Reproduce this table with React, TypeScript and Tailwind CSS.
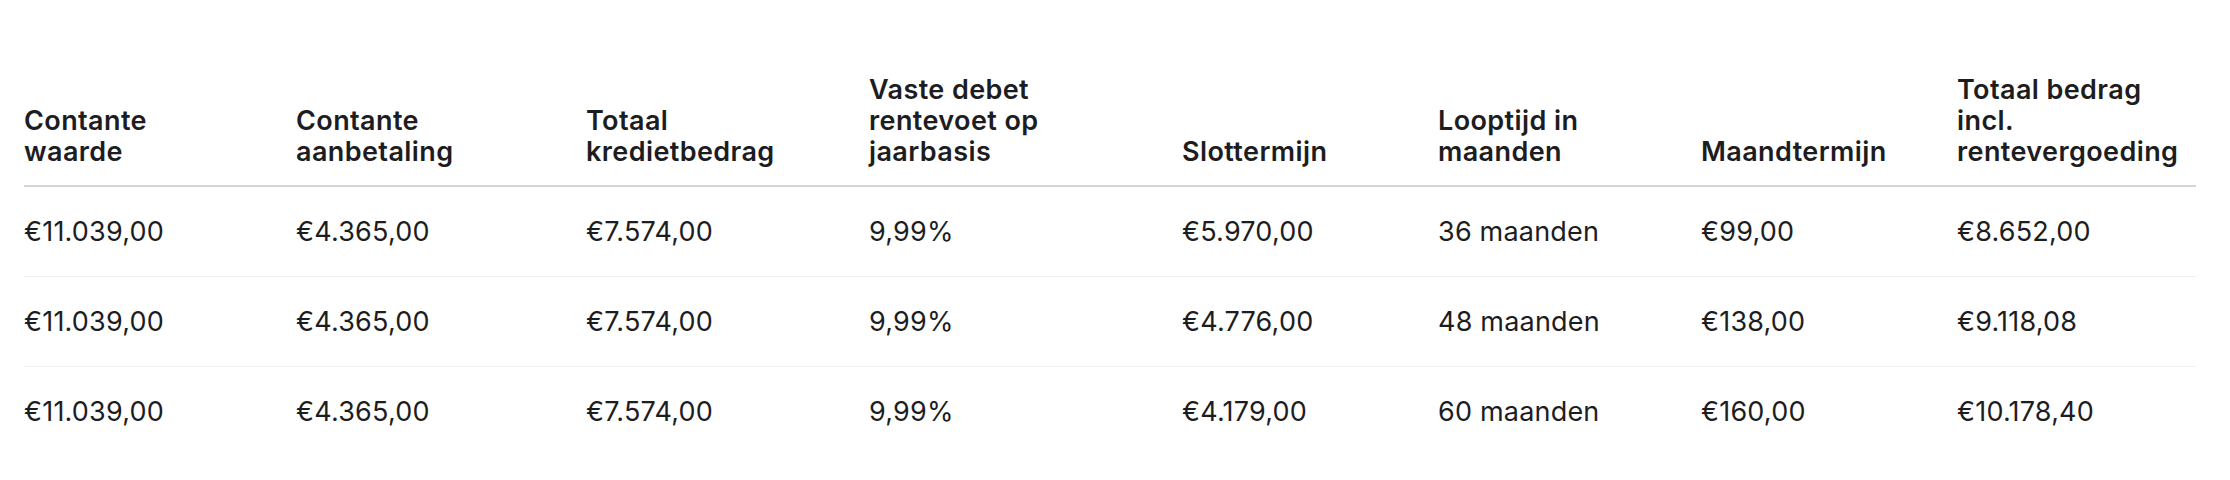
const headers: React.ReactNode[] = [
  <>Contante<br />waarde</>,
  <>Contante<br />aanbetaling</>,
  <>Totaal<br />kredietbedrag</>,
  <>Vaste debet<br />rentevoet op<br />jaarbasis</>,
  <>Slottermijn</>,
  <>Looptijd in<br />maanden</>,
  <>Maandtermijn</>,
  <>Totaal bedrag<br />incl.<br />rentevergoeding</>,
];

const rows = [
  ["€11.039,00", "€4.365,00", "€7.574,00", "9,99%", "€5.970,00", "36 maanden", "€99,00", "€8.652,00"],
  ["€11.039,00", "€4.365,00", "€7.574,00", "9,99%", "€4.776,00", "48 maanden", "€138,00", "€9.118,08"],
  ["€11.039,00", "€4.365,00", "€7.574,00", "9,99%", "€4.179,00", "60 maanden", "€160,00", "€10.178,40"],
];

function App() {
  return (
    <div className="min-h-[480px] bg-white px-6 pt-[56px] font-['Inter',sans-serif] text-[#1d1d1f]">
      <table className="w-[2172px] table-fixed border-collapse text-left">
        <colgroup>
          <col className="w-[272px]" />
          <col className="w-[290px]" />
          <col className="w-[283px]" />
          <col className="w-[313px]" />
          <col className="w-[256px]" />
          <col className="w-[263px]" />
          <col className="w-[256px]" />
          <col className="w-[239px]" />
        </colgroup>
        <thead>
          <tr className="border-b-2 border-[#d4d4d4]">
            {headers.map((h, i) => (
              <th
                key={i}
                className="py-[18px] align-bottom text-[27px] leading-[31px] font-semibold tracking-[0.4px]"
              >
                {h}
              </th>
            ))}
          </tr>
        </thead>
        <tbody>
          {rows.map((row, r) => (
            <tr key={r} className="border-b border-[#f0f0f0] last:border-b-0">
              {row.map((cell, c) => (
                <td key={c} className="py-[29px] text-[27px] leading-[31px] font-normal tracking-[0.2px]">
                  {cell}
                </td>
              ))}
            </tr>
          ))}
        </tbody>
      </table>
    </div>
  );
}

export default App;
